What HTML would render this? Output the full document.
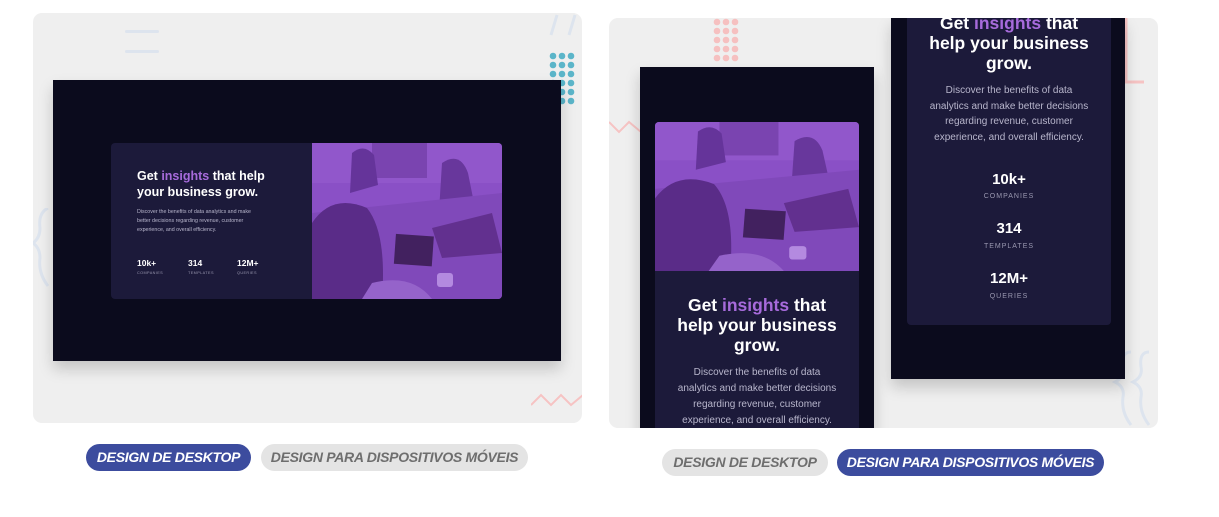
<!DOCTYPE html>
<html><head><meta charset="utf-8"><style>
*{margin:0;padding:0;box-sizing:border-box}
body{width:1219px;height:517px;background:#fff;position:relative;overflow:hidden;font-family:"Liberation Sans",sans-serif}
.abs{position:absolute}
.card{position:absolute;background:#efefef;border-radius:9px;overflow:hidden}
.scr{position:absolute;background:#0b0b1d;box-shadow:0 8px 14px rgba(0,0,0,.18)}
.panel{position:absolute;background:#1c1a3a;border-radius:4px;overflow:hidden}
.w{color:#fff;font-weight:bold}
.p{color:#a76bdb}
.btn{position:absolute;border-radius:14px;font-weight:bold;font-style:italic;font-size:14px;text-align:center;line-height:27px;letter-spacing:-0.3px;font-family:"Liberation Sans Narrow","Liberation Sans",sans-serif}
.on{background:#3c4c9e;color:#fff}
.off{background:#e4e4e4;color:#6e6e6e}
.c{text-align:center}
</style></head><body>
<svg width="0" height="0" style="position:absolute"><defs>
<symbol id="img" viewBox="0 0 190 156" preserveAspectRatio="none">
<rect width="190" height="156" fill="#8a50c6"/>
<rect x="0" y="0" width="190" height="40" fill="#9157cb"/>
<rect x="60" y="0" width="55" height="35" fill="#7a44b0"/>
<path d="M40 10 q12-10 22 2 l4 30 -28 8z" fill="#65349a"/>
<path d="M130 20 q18-12 26 10 l10 50 -40 5z" fill="#68379c"/>
<path d="M0 70 L190 50 190 156 0 156z" fill="#8049ba"/>
<path d="M0 80 q20-30 55-15 q20 25 15 91 H0z" fill="#5a2c88"/>
<rect x="83" y="92" width="38" height="30" fill="#42215f" transform="rotate(4 100 105)"/>
<path d="M120 85 L180 70 190 110 130 115z" fill="#62308f"/>
<rect x="125" y="130" width="16" height="14" rx="3" fill="#b48ae0"/>
<path d="M60 140 q40-10 60 16 H50z" fill="#9563ca"/>
</symbol></defs></svg>

<!-- LEFT CARD -->
<div class="card" style="left:33px;top:13px;width:549px;height:410px">
 <div class="abs" style="left:92px;top:17px;width:34px;height:3px;background:#dde4ee;border-radius:2px"></div>
 <div class="abs" style="left:92px;top:37px;width:34px;height:3px;background:#dde4ee;border-radius:2px"></div>
 <svg class="abs" style="left:498px;top:376px" width="52" height="20"><path d="M0 16 L10 6 L20 16 L30 6 L40 16 L52 6" stroke="#f6c3c3" stroke-width="2" fill="none"/></svg>
 <svg class="abs" style="left:510px;top:0" width="40" height="25"><path d="M8 22 L14 2 M26 22 L32 2" stroke="#dde4ee" stroke-width="3" fill="none"/></svg>
 <svg class="abs" style="left:0;top:195px" width="20" height="80"><path d="M15 0 q-10 5 -8 20 q0 10 -7 15 q7 5 7 15 q-2 15 8 28" stroke="#dde4ee" stroke-width="3" fill="none"/></svg>
</div>
<div class="abs" style="left:549px;top:52px;width:28px;height:56px">
 <svg width="28" height="56"><g fill="#5bb5c9">
 <circle cx="4" cy="4" r="3.3"/><circle cx="13" cy="4" r="3.3"/><circle cx="22" cy="4" r="3.3"/>
 <circle cx="4" cy="13" r="3.3"/><circle cx="13" cy="13" r="3.3"/><circle cx="22" cy="13" r="3.3"/>
 <circle cx="4" cy="22" r="3.3"/><circle cx="13" cy="22" r="3.3"/><circle cx="22" cy="22" r="3.3"/>
 <circle cx="4" cy="31" r="3.3"/><circle cx="13" cy="31" r="3.3"/><circle cx="22" cy="31" r="3.3"/>
 <circle cx="4" cy="40" r="3.3"/><circle cx="13" cy="40" r="3.3"/><circle cx="22" cy="40" r="3.3"/>
 <circle cx="4" cy="49" r="3.3"/><circle cx="13" cy="49" r="3.3"/><circle cx="22" cy="49" r="3.3"/>
 </g></svg></div>
<div class="scr" style="left:53px;top:80px;width:508px;height:281px">
 <div class="panel" style="left:58px;top:63px;width:391px;height:156px">
  <div class="abs w" style="left:26px;top:25px;font-size:12.5px;line-height:16px;width:150px">Get <span class="p">insights</span> that help your business grow.</div>
  <div class="abs" style="left:26px;top:65px;font-size:5.3px;line-height:9px;color:#b8b6cc;width:118px">Discover the benefits of data analytics and make better decisions regarding revenue, customer experience, and overall efficiency.</div>
  <div class="abs w" style="left:26px;top:115px;font-size:8.5px">10k+</div>
  <div class="abs" style="left:26px;top:128px;font-size:3.8px;color:#9a98b0;letter-spacing:.4px">COMPANIES</div>
  <div class="abs w" style="left:77px;top:115px;font-size:8.5px">314</div>
  <div class="abs" style="left:77px;top:128px;font-size:3.8px;color:#9a98b0;letter-spacing:.4px">TEMPLATES</div>
  <div class="abs w" style="left:126px;top:115px;font-size:8.5px">12M+</div>
  <div class="abs" style="left:126px;top:128px;font-size:3.8px;color:#9a98b0;letter-spacing:.4px">QUERIES</div>
  <svg class="abs" style="left:201px;top:0" width="190" height="156"><use href="#img"/></svg>
 </div>
</div>
<div class="btn on" style="left:86px;top:444px;width:165px;height:27px">DESIGN DE DESKTOP</div>
<div class="btn off" style="left:261px;top:444px;width:267px;height:27px">DESIGN PARA DISPOSITIVOS MÓVEIS</div>

<!-- RIGHT CARD -->
<div class="card" style="left:609px;top:18px;width:549px;height:410px">
 <svg class="abs" style="left:0;top:98px" width="32" height="20"><path d="M0 6 L10 16 L20 6 L32 16" stroke="#f6c3c3" stroke-width="2" fill="none"/></svg>
 <svg class="abs" style="left:515px;top:0" width="20" height="66"><path d="M2 0 V64 H20" stroke="#f6c3c3" stroke-width="3" fill="none"/></svg>
 <svg class="abs" style="left:500px;top:330px" width="49" height="80"><path d="M22 4 q-10 0 -8 15 q2 10 -8 15 q10 5 8 15 q-2 15 8 28 M40 4 q-10 0 -8 15 q2 10 -8 15 q10 5 8 15 q-2 15 8 28" stroke="#dde4ee" stroke-width="3" fill="none"/></svg>
 <svg class="abs" style="left:104px;top:0" width="28" height="48"><g fill="#f6c0c0">
 <circle cx="4" cy="4" r="3.3"/><circle cx="13" cy="4" r="3.3"/><circle cx="22" cy="4" r="3.3"/>
 <circle cx="4" cy="13" r="3.3"/><circle cx="13" cy="13" r="3.3"/><circle cx="22" cy="13" r="3.3"/>
 <circle cx="4" cy="22" r="3.3"/><circle cx="13" cy="22" r="3.3"/><circle cx="22" cy="22" r="3.3"/>
 <circle cx="4" cy="31" r="3.3"/><circle cx="13" cy="31" r="3.3"/><circle cx="22" cy="31" r="3.3"/>
 <circle cx="4" cy="40" r="3.3"/><circle cx="13" cy="40" r="3.3"/><circle cx="22" cy="40" r="3.3"/>
 </g></svg>
 <!-- phone 1 -->
 <div class="scr" style="left:31px;top:49px;width:234px;height:370px">
  <div class="panel" style="left:15px;top:55px;width:204px;height:320px">
   <svg class="abs" style="left:0;top:0" width="204" height="149"><use href="#img"/></svg>
   <div class="abs w c" style="left:0;top:173px;width:204px;font-size:17.5px;line-height:20px">Get <span class="p">insights</span> that<br>help your business<br>grow.</div>
   <div class="abs c" style="left:0;top:243px;width:204px;font-size:10px;line-height:16px;color:#b8b6cc">Discover the benefits of data<br>analytics and make better decisions<br>regarding revenue, customer<br>experience, and overall efficiency.</div>
  </div>
 </div>
 <!-- phone 2 -->
 <div class="scr" style="left:282px;top:0;width:234px;height:361px">
  <div class="panel" style="left:16px;top:-10px;width:204px;height:317px">
   <div class="abs w c" style="left:0;top:5px;width:204px;font-size:17.5px;line-height:20px">Get <span class="p">insights</span> that<br>help your business<br>grow.</div>
   <div class="abs c" style="left:0;top:75px;width:204px;font-size:10px;line-height:15.7px;color:#b8b6cc">Discover the benefits of data<br>analytics and make better decisions<br>regarding revenue, customer<br>experience, and overall efficiency.</div>
   <div class="abs w c" style="left:0;top:163px;width:204px;font-size:15px">10k+</div>
   <div class="abs c" style="left:0;top:185px;width:204px;font-size:7px;color:#9a98b0;letter-spacing:1px">COMPANIES</div>
   <div class="abs w c" style="left:0;top:212px;width:204px;font-size:15px">314</div>
   <div class="abs c" style="left:0;top:235px;width:204px;font-size:7px;color:#9a98b0;letter-spacing:1px">TEMPLATES</div>
   <div class="abs w c" style="left:0;top:262px;width:204px;font-size:15px">12M+</div>
   <div class="abs c" style="left:0;top:285px;width:204px;font-size:7px;color:#9a98b0;letter-spacing:1px">QUERIES</div>
  </div>
 </div>
</div>
<div class="btn off" style="left:662px;top:449px;width:166px;height:27px">DESIGN DE DESKTOP</div>
<div class="btn on" style="left:837px;top:449px;width:267px;height:27px">DESIGN PARA DISPOSITIVOS MÓVEIS</div>
</body></html>
